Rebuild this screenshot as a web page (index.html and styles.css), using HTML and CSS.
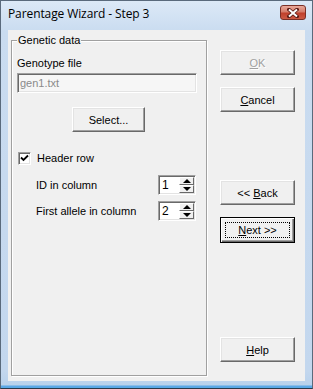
FILE: index.html
```html
<!DOCTYPE html>
<html lang="en">
<head>
    <meta charset="UTF-8">
    <title>Parentage Wizard - Step 3</title>
    <link rel="stylesheet" href="styles.css">
</head>
<body>

<div class="window">
    <div class="titlebar">
        <span class="title">Parentage Wizard - Step 3</span>
        <span class="close">
            <svg width="12" height="10" viewBox="0 0 12 10">
                <path d="M2 1.5 L10 8.5 M10 1.5 L2 8.5" stroke="#5a1a14" stroke-width="3.6" stroke-linecap="square"/>
                <path d="M2 1.5 L10 8.5 M10 1.5 L2 8.5" stroke="#fff" stroke-width="2"/>
            </svg>
        </span>
    </div>

    <div class="client">
        <fieldset class="group">
            <legend>Genetic data</legend>

            <div class="label">Genotype file</div>
            <input class="edit" type="text" value="gen1.txt" readonly>

            <div class="select-row">
                <button class="btn btn-select">Select...</button>
            </div>

            <label class="check">
                <span class="box">
                    <svg width="9" height="9" viewBox="0 0 9 9">
                        <path d="M1 3.5 L3.5 6 L8 1.5" fill="none" stroke="#000" stroke-width="1.8"/>
                    </svg>
                </span>
                Header row
            </label>

            <div class="field-row">
                <span>ID in column</span>
                <span class="spin">
                    <span class="spin-val">1</span>
                    <span class="arrows">
                        <span class="arrow"><span class="tri-up"></span></span>
                        <span class="arrow"><span class="tri-down"></span></span>
                    </span>
                </span>
            </div>

            <div class="field-row second">
                <span>First allele in column</span>
                <span class="spin">
                    <span class="spin-val">2</span>
                    <span class="arrows">
                        <span class="arrow"><span class="tri-up"></span></span>
                        <span class="arrow"><span class="tri-down"></span></span>
                    </span>
                </span>
            </div>
        </fieldset>

        <div class="buttons">
            <button class="btn btn-ok" disabled><u>O</u>K</button>
            <button class="btn btn-cancel"><u>C</u>ancel</button>
            <button class="btn btn-back">&lt;&lt; <u>B</u>ack</button>
            <button class="btn btn-next default"><span class="focus"><u>N</u>ext &gt;&gt;</span></button>
            <button class="btn btn-help"><u>H</u>elp</button>
        </div>
    </div>
</div>

</body>
</html>
```

FILE: styles.css
```css
body {
    margin: 0;
    padding: 0;
    font-family: "Liberation Sans", Arial, sans-serif;
    font-size: 11px;
    color: #000;
}

.window {
    width: 313px;
    height: 389px;
    box-sizing: border-box;
    border: 1px solid #5a6a7c;
    border-bottom-color: #2a3a4a;
    background: linear-gradient(to bottom, #dce9f7 0px, #cadcf0 30px, #c3d7ee 370px, #b9d2ec 384px, #5aa8e6 385px, #5aa8e6 387px);
    padding: 0 7px 7px 7px;
    display: flex;
    flex-direction: column;
}

.titlebar {
    height: 29px;
    display: flex;
    align-items: flex-start;
    justify-content: space-between;
}

.title {
    font-family: "Open Sans", "Noto Sans", sans-serif;
    font-size: 12px;
    color: #000;
    margin-top: 4px;
    letter-spacing: -0.1px;
}

.close {
    width: 26px;
    height: 15px;
    margin-top: 4px;
    margin-right: -1px;
    box-sizing: border-box;
    border: 1px solid #7a2f26;
    border-radius: 3px;
    background: linear-gradient(to bottom, #e8a89a 0%, #d57c6a 45%, #c0402c 55%, #cc5a44 100%);
    display: flex;
    align-items: center;
    justify-content: center;
}

.client {
    flex: 1;
    background-color: #f0f0f0;
    display: flex;
    align-items: flex-start;
}

/* group box */
.group {
    margin: 4px 0 0 3px;
    padding: 0 8px 0 5px;
    width: 196px;
    height: 342px;
    box-sizing: border-box;
    border: 1px solid #a0a0a0;
    box-shadow: inset 1px 1px 0 #fff, 1px 1px 0 #fff;
}

.group legend {
    padding: 0 1px;
    line-height: 13px;
    background-color: #f0f0f0;
}

.label {
    margin-top: 9px;
    line-height: 14px;
}

.edit {
    display: block;
    margin: 3px 0 0 0;
    width: 180px;
    height: 20px;
    box-sizing: border-box;
    padding: 0 2px;
    font-family: inherit;
    font-size: 11px;
    color: #8a8a8a;
    background-color: #f6f6f6;
    border: 1px solid;
    border-color: #a0a0a0 #fff #fff #a0a0a0;
    box-shadow: inset 1px 1px 0 #696969, inset -1px -1px 0 #e3e3e3;
    outline: none;
}

.select-row {
    margin-top: 14px;
    padding-left: 55px;
}

/* buttons */
.btn {
    display: block;
    width: 75px;
    height: 25px;
    padding: 0;
    font-family: inherit;
    font-size: 11px;
    color: #000;
    background-color: #f0f0f0;
    border: 1px solid;
    border-color: #fff #696969 #696969 #fff;
    box-shadow: inset -1px -1px 0 #a0a0a0, inset 1px 1px 0 #e3e3e3;
}

.btn-select {
    width: 73px;
}

.btn:disabled {
    color: #a0a0a0;
    text-shadow: 1px 1px 0 #fff;
}

.btn.default {
    border: 1px solid #000;
    box-shadow: inset 1px 1px 0 #fff, inset -1px -1px 0 #696969, inset -2px -2px 0 #a0a0a0;
    padding: 4px;
}

.focus {
    display: flex;
    align-items: center;
    justify-content: center;
    height: 100%;
    border: 1px dotted #000;
    box-sizing: border-box;
}

.buttons {
    margin-left: 13px;
    display: flex;
    flex-direction: column;
}

.btn-ok {
    margin-top: 20px;
}

.btn-cancel {
    margin-top: 12px;
}

.btn-back {
    margin-top: 68px;
}

.btn-next {
    margin-top: 12px;
    height: 26px;
}

.btn-help {
    margin-top: 94px;
}

/* checkbox */
.check {
    display: flex;
    align-items: center;
    margin-top: 19px;
    padding-left: 1px;
    height: 14px;
}

.box {
    width: 13px;
    height: 13px;
    box-sizing: border-box;
    margin-right: 6px;
    background-color: #fff;
    border: 1px solid;
    border-color: #a0a0a0 #fff #fff #a0a0a0;
    box-shadow: inset 1px 1px 0 #696969, inset -1px -1px 0 #e3e3e3;
    display: flex;
    align-items: center;
    justify-content: center;
}

/* spin rows */
.field-row {
    display: flex;
    align-items: center;
    justify-content: space-between;
    margin-top: 10px;
    padding: 0 2px 0 19px;
    height: 20px;
}

.field-row.second {
    margin-top: 6px;
}

.spin {
    display: flex;
    width: 38px;
    height: 20px;
    box-sizing: border-box;
    background-color: #fff;
    border: 1px solid;
    border-color: #a0a0a0 #fff #fff #a0a0a0;
    box-shadow: inset 1px 1px 0 #696969, inset -1px -1px 0 #e3e3e3;
    padding: 1px;
}

.spin-val {
    flex: 1;
    padding-left: 2px;
    line-height: 16px;
    font-size: 12px;
}

.arrows {
    width: 15px;
    display: flex;
    flex-direction: column;
}

.arrow {
    flex: 1;
    box-sizing: border-box;
    background-color: #f0f0f0;
    border: 1px solid;
    border-color: #fff #696969 #696969 #fff;
    display: flex;
    align-items: center;
    justify-content: center;
}

.tri-up {
    width: 0;
    height: 0;
    border-left: 4px solid transparent;
    border-right: 4px solid transparent;
    border-bottom: 4px solid #000;
}

.tri-down {
    width: 0;
    height: 0;
    border-left: 4px solid transparent;
    border-right: 4px solid transparent;
    border-top: 4px solid #000;
}
```
